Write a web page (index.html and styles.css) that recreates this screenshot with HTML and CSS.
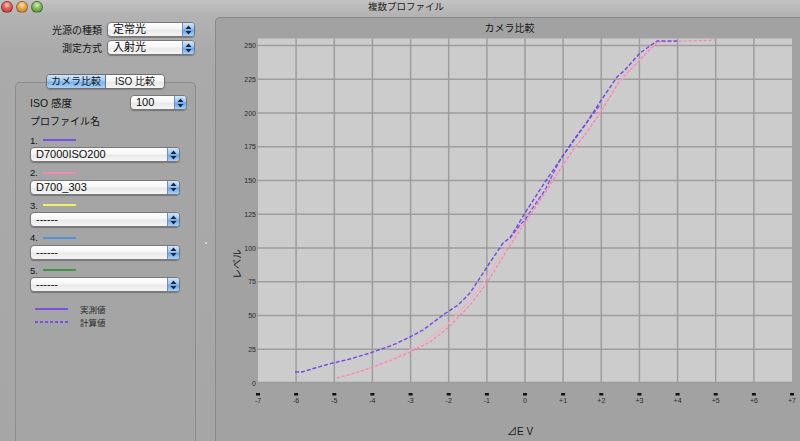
FILE: index.html
```html
<!DOCTYPE html>
<html lang="ja">
<head>
<meta charset="utf-8">
<title>複数プロファイル</title>
<link rel="stylesheet" href="styles.css">
</head>
<body>
<div class="window">
  <div class="titlebar">
    <div class="lights">
      <span class="light red"></span><span class="light yellow"></span><span class="light green"></span>
    </div>
    <div class="title">複数プロファイル</div>
    <div></div>
  </div>
  <div class="main">
    <div class="left">
      <div class="setting-row">
        <span class="setting-label">光源の種類</span>
        <div class="popup popup-top"><span class="popup-text">定常光</span><span class="popup-arrows"><svg width="7" height="10" viewBox="0 0 7 10"><path d="M3.5 0.5 L6.5 4 L0.5 4 Z M3.5 9.5 L6.5 6 L0.5 6 Z" fill="#1b2740"/></svg></span></div>
      </div>
      <div class="setting-row second">
        <span class="setting-label">測定方式</span>
        <div class="popup popup-top"><span class="popup-text">入射光</span><span class="popup-arrows"><svg width="7" height="10" viewBox="0 0 7 10"><path d="M3.5 0.5 L6.5 4 L0.5 4 Z M3.5 9.5 L6.5 6 L0.5 6 Z" fill="#1b2740"/></svg></span></div>
      </div>

      <div class="tabs">
        <span class="tab selected">カメラ比較</span><span class="tab">ISO 比較</span>
      </div>
      <div class="group-wrap">
        <div class="group">
          <div class="iso-row">
            <span class="iso-label">ISO 感度</span>
            <div class="popup popup-iso"><span class="popup-text">100</span><span class="popup-arrows"><svg width="7" height="10" viewBox="0 0 7 10"><path d="M3.5 0.5 L6.5 4 L0.5 4 Z M3.5 9.5 L6.5 6 L0.5 6 Z" fill="#1b2740"/></svg></span></div>
          </div>
          <div class="profile-heading">プロファイル名</div>

          <div class="profile first">
            <div class="profile-num">1. <span class="swatch c-purple"></span></div>
            <div class="popup popup-profile"><span class="popup-text">D7000ISO200</span><span class="popup-arrows"><svg width="7" height="10" viewBox="0 0 7 10"><path d="M3.5 0.5 L6.5 4 L0.5 4 Z M3.5 9.5 L6.5 6 L0.5 6 Z" fill="#1b2740"/></svg></span></div>
          </div>
          <div class="profile">
            <div class="profile-num">2. <span class="swatch c-pink"></span></div>
            <div class="popup popup-profile"><span class="popup-text">D700_303</span><span class="popup-arrows"><svg width="7" height="10" viewBox="0 0 7 10"><path d="M3.5 0.5 L6.5 4 L0.5 4 Z M3.5 9.5 L6.5 6 L0.5 6 Z" fill="#1b2740"/></svg></span></div>
          </div>
          <div class="profile">
            <div class="profile-num">3. <span class="swatch c-yellow"></span></div>
            <div class="popup popup-profile"><span class="popup-text">------</span><span class="popup-arrows"><svg width="7" height="10" viewBox="0 0 7 10"><path d="M3.5 0.5 L6.5 4 L0.5 4 Z M3.5 9.5 L6.5 6 L0.5 6 Z" fill="#1b2740"/></svg></span></div>
          </div>
          <div class="profile">
            <div class="profile-num">4. <span class="swatch c-blue"></span></div>
            <div class="popup popup-profile"><span class="popup-text">------</span><span class="popup-arrows"><svg width="7" height="10" viewBox="0 0 7 10"><path d="M3.5 0.5 L6.5 4 L0.5 4 Z M3.5 9.5 L6.5 6 L0.5 6 Z" fill="#1b2740"/></svg></span></div>
          </div>
          <div class="profile">
            <div class="profile-num">5. <span class="swatch c-green"></span></div>
            <div class="popup popup-profile"><span class="popup-text">------</span><span class="popup-arrows"><svg width="7" height="10" viewBox="0 0 7 10"><path d="M3.5 0.5 L6.5 4 L0.5 4 Z M3.5 9.5 L6.5 6 L0.5 6 Z" fill="#1b2740"/></svg></span></div>
          </div>

          <div class="legend">
            <div class="legend-row"><span class="legend-line solid"></span><span class="legend-text">実測値</span></div>
            <div class="legend-row"><span class="legend-line dashed"></span><span class="legend-text">計算値</span></div>
          </div>
        </div>
        <div class="splitter"><span class="splitter-dot"></span></div>
      </div>
    </div>

    <div class="chart-box">
      <div class="chart-title">カメラ比較</div>
      <svg class="chart" width="585" height="403" viewBox="216 38 585 403">
        <rect x="258" y="38.5" width="534" height="344.5" fill="#cccccc"/>
        <g stroke="#9d9d9d" stroke-width="1.5">
          <line x1="258" x2="792" y1="349.25" y2="349.25"/>
          <line x1="258" x2="792" y1="315.5" y2="315.5"/>
          <line x1="258" x2="792" y1="281.75" y2="281.75"/>
          <line x1="258" x2="792" y1="248" y2="248"/>
          <line x1="258" x2="792" y1="214.25" y2="214.25"/>
          <line x1="258" x2="792" y1="180.5" y2="180.5"/>
          <line x1="258" x2="792" y1="146.75" y2="146.75"/>
          <line x1="258" x2="792" y1="113" y2="113"/>
          <line x1="258" x2="792" y1="79.25" y2="79.25"/>
          <line x1="258" x2="792" y1="45.5" y2="45.5"/>
          <line x1="258" x2="792" y1="382.5" y2="382.5"/>
          <line y1="38.5" y2="383" x1="296.1" x2="296.1"/>
          <line y1="38.5" y2="383" x1="334.3" x2="334.3"/>
          <line y1="38.5" y2="383" x1="372.4" x2="372.4"/>
          <line y1="38.5" y2="383" x1="410.6" x2="410.6"/>
          <line y1="38.5" y2="383" x1="448.7" x2="448.7"/>
          <line y1="38.5" y2="383" x1="486.9" x2="486.9"/>
          <line y1="38.5" y2="383" x1="525" x2="525"/>
          <line y1="38.5" y2="383" x1="563.1" x2="563.1"/>
          <line y1="38.5" y2="383" x1="601.3" x2="601.3"/>
          <line y1="38.5" y2="383" x1="639.4" x2="639.4"/>
          <line y1="38.5" y2="383" x1="677.6" x2="677.6"/>
          <line y1="38.5" y2="383" x1="715.7" x2="715.7"/>
          <line y1="38.5" y2="383" x1="753.9" x2="753.9"/>
        </g>

        <g class="ylabels" text-anchor="end">
          <text x="256" y="385.5">0</text>
          <text x="256" y="351.75">25</text>
          <text x="256" y="318">50</text>
          <text x="256" y="284.25">75</text>
          <text x="256" y="250.5">100</text>
          <text x="256" y="216.75">125</text>
          <text x="256" y="183">150</text>
          <text x="256" y="149.25">175</text>
          <text x="256" y="115.5">200</text>
          <text x="256" y="81.75">225</text>
          <text x="256" y="48">250</text>
        </g>

        <g fill="#111">
          <rect x="256" y="393" width="4" height="2.5"/>
          <rect x="294.1" y="393" width="4" height="2.5"/>
          <rect x="332.3" y="393" width="4" height="2.5"/>
          <rect x="370.4" y="393" width="4" height="2.5"/>
          <rect x="408.6" y="393" width="4" height="2.5"/>
          <rect x="446.7" y="393" width="4" height="2.5"/>
          <rect x="484.9" y="393" width="4" height="2.5"/>
          <rect x="523" y="393" width="4" height="2.5"/>
          <rect x="561.1" y="393" width="4" height="2.5"/>
          <rect x="599.3" y="393" width="4" height="2.5"/>
          <rect x="637.4" y="393" width="4" height="2.5"/>
          <rect x="675.6" y="393" width="4" height="2.5"/>
          <rect x="713.7" y="393" width="4" height="2.5"/>
          <rect x="751.9" y="393" width="4" height="2.5"/>
          <rect x="790" y="393" width="4" height="2.5"/>
        </g>
        <g class="xlabels" text-anchor="middle">
          <text x="258" y="403">-7</text>
          <text x="296.1" y="403">-6</text>
          <text x="334.3" y="403">-5</text>
          <text x="372.4" y="403">-4</text>
          <text x="410.6" y="403">-3</text>
          <text x="448.7" y="403">-2</text>
          <text x="486.9" y="403">-1</text>
          <text x="525" y="403">0</text>
          <text x="563.1" y="403">+1</text>
          <text x="601.3" y="403">+2</text>
          <text x="639.4" y="403">+3</text>
          <text x="677.6" y="403">+4</text>
          <text x="715.7" y="403">+5</text>
          <text x="753.9" y="403">+6</text>
          <text x="792" y="403">+7</text>
        </g>

        <text class="axis-title" x="520" y="435" text-anchor="middle">⊿E V</text>
        <text class="axis-title" x="241" y="264" text-anchor="middle" transform="rotate(-90 241 264)">レベル</text>

        <g fill="none" stroke-linejoin="round">
          <polyline stroke="#f4b0c8" stroke-width="1.2" points="342,377 360,372 378,365 396,357 414,348 432,337 450,322 468,302 484,282 503,252 522,224 540,198 558,172 570,155 588,130 600,112 618,84 636,64 652,46 660,41"/>
          <polyline stroke="#ee8ab4" stroke-width="1.3" stroke-dasharray="3 2" points="337,378 355,373 373,367 392,360 410,352 430,342 449,327 470,305 487,283 507,250 527,220 545,193 563,165 573,150 590,128 602,110 620,80 640,60 657,42 718,40"/>
          <polyline stroke="#7b4fe6" stroke-width="1.3" stroke-dasharray="4 2" points="510,238 520,225 525,220 530,212 545,190 560,160 575,138 600,105"/>
          <polyline stroke="#7548e0" stroke-width="1.4" stroke-dasharray="4 2" points="295,372 302,372 315,368 333,363 350,359 370,353 393,345 410,337 423,330 443,315 458,305 470,293 487,267 503,243 510,238 525,213 545,182 567,150 585,125 600,102 617,77 625,70 640,53 657,41 677,41"/>
        </g>
      </svg>
    </div>
  </div>
</div>
</body>
</html>
```

FILE: styles.css
```css
* { box-sizing: border-box; }

body {
  margin: 0;
  width: 800px;
  height: 441px;
  overflow: hidden;
  background: linear-gradient(#c2c2c2 0px, #b2b2b2 16px, #aaaaaa 50px, #a6a6a6 441px);
  font-family: "Liberation Sans", "Noto Sans CJK JP", sans-serif;
  color: #141414;
}

.window {
  width: 800px;
  height: 441px;
  display: flex;
  flex-direction: column;
}

.titlebar {
  height: 14px;
  flex: none;
  display: grid;
  grid-template-columns: 1fr auto 1fr;
  align-items: center;
}

.lights {
  display: flex;
  gap: 3px;
  padding-left: 1px;
  align-items: center;
}

.light {
  width: 12px;
  height: 12px;
  border-radius: 50%;
  border: 1px solid rgba(0,0,0,0.3);
}
.light.red { background: radial-gradient(circle at 50% 30%, #f8c0b8 0, #dc6058 45%, #b03a34 100%); }
.light.yellow { background: radial-gradient(circle at 50% 30%, #fbe0b0 0, #e8a44a 45%, #b8782a 100%); }
.light.green { background: radial-gradient(circle at 50% 30%, #d8f0c0 0, #80b85a 45%, #4a8a32 100%); }

.title {
  font-size: 9.5px;
  line-height: 14px;
  padding-left: 12px;
  color: #202020;
}

.main {
  flex: 1;
  display: flex;
  min-height: 0;
}

.left {
  width: 215px;
  flex: none;
  display: flex;
  flex-direction: column;
}

.setting-row {
  display: flex;
  align-items: center;
  margin-top: 8px;
  height: 15px;
}
.setting-row.second { margin-top: 3px; }

.setting-label {
  width: 103px;
  text-align: right;
  font-size: 10px;
  padding-right: 1px;
  margin-right: 4px;
}

.popup {
  display: flex;
  height: 15px;
  border: 1px solid #787878;
  border-radius: 4px;
  background: linear-gradient(#ffffff 0%, #f6f6f6 45%, #e9e9e9 55%, #f5f5f5 100%);
  box-shadow: 0 1px 1px rgba(0,0,0,0.28);
  overflow: hidden;
}

.popup-text {
  flex: 1;
  font-size: 11px;
  line-height: 13px;
  padding-left: 5px;
  white-space: nowrap;
  color: #0c0c0c;
}

.popup-arrows {
  width: 12px;
  flex: none;
  display: flex;
  align-items: center;
  justify-content: center;
  border-left: 1px solid #6f8fb6;
  background: linear-gradient(#d2e6fb 0%, #9cc6f3 45%, #6aa6ea 55%, #a9d2f8 100%);
}

.popup-top { width: 88px; }
.popup-iso { width: 57px; }
.popup-profile { width: 150px; }

.tabs {
  display: flex;
  margin-top: 19px;
  margin-left: 46px;
  width: 119px;
  height: 15px;
  border: 1px solid #6e6e6e;
  border-radius: 4px;
  overflow: hidden;
  margin-bottom: -7px;
  position: relative;
  z-index: 1;
  box-shadow: 0 1px 1px rgba(0,0,0,0.2);
}

.tab {
  font-size: 10px;
  line-height: 13px;
  text-align: center;
  background: linear-gradient(#ffffff 0%, #f6f6f6 45%, #e8e8e8 55%, #f4f4f4 100%);
}
.tab:first-child { width: 59px; border-right: 1px solid #6e6e6e; }
.tab:last-child { flex: 1; }
.tab.selected {
  background: linear-gradient(#cfe5fb 0%, #a3cbf3 45%, #78b1ec 55%, #a8d3f8 100%);
}

.group-wrap {
  flex: 1;
  display: flex;
  min-height: 0;
}

.group {
  margin-left: 15px;
  width: 181px;
  flex: none;
  border: 1px solid #8c8c8c;
  border-bottom: none;
  border-radius: 5px 5px 0 0;
  background: #a5a5a5;
  padding: 12px 8px 0 14px;
}

.splitter {
  flex: 1;
  display: flex;
  justify-content: center;
  padding-top: 160px;
}

.splitter-dot {
  width: 2px;
  height: 2px;
  border-radius: 1px;
  background: #e4e4e4;
}

.iso-row {
  display: flex;
  align-items: center;
  justify-content: space-between;
  height: 15px;
}

.iso-label {
  font-size: 10.5px;
}

.profile-heading {
  font-size: 10px;
  line-height: 14px;
  margin-top: 5px;
}

.profile {
  margin-top: 4.5px;
}
.profile.first { margin-top: 5px; }

.profile-num {
  display: flex;
  align-items: center;
  height: 12px;
  font-size: 9.5px;
}

.swatch {
  display: inline-block;
  width: 33px;
  height: 2px;
  margin-left: 5px;
}
.c-purple { background: #7b4fe6; }
.c-pink { background: #f08cb8; }
.c-yellow { background: #f2f06a; }
.c-blue { background: #4b94e4; }
.c-green { background: #3c983c; }

.profile .popup { margin-top: 1px; }

.legend {
  margin-top: 10px;
  padding-left: 5px;
}

.legend-row {
  display: flex;
  align-items: center;
  height: 13px;
}

.legend-line {
  width: 33px;
  height: 2px;
  margin-right: 12px;
}
.legend-line.solid { background: #7b4fe6; }
.legend-line.dashed {
  background: repeating-linear-gradient(90deg, #7b4fe6 0 3px, transparent 3px 5px);
}

.legend-text {
  font-size: 8.5px;
  color: #2a2a2a;
}

.chart-box {
  margin-top: 3px;
  width: 595px;
  flex: none;
  border: 1px solid #8a8a8a;
  border-bottom: none;
  border-radius: 5px 5px 0 0;
  background: #a2a2a2;
  display: flex;
  flex-direction: column;
}

.chart-title {
  height: 20px;
  line-height: 22px;
  font-size: 10px;
  text-align: center;
  padding-right: 6px;
}

.chart {
  display: block;
  flex: none;
}

.ylabels text, .xlabels text {
  font-family: "Liberation Sans", sans-serif;
  font-size: 7px;
  fill: #2a2a2a;
}

.axis-title {
  font-family: "Liberation Sans", "Noto Sans CJK JP", sans-serif;
  font-size: 10px;
  fill: #1a1a1a;
}
```
